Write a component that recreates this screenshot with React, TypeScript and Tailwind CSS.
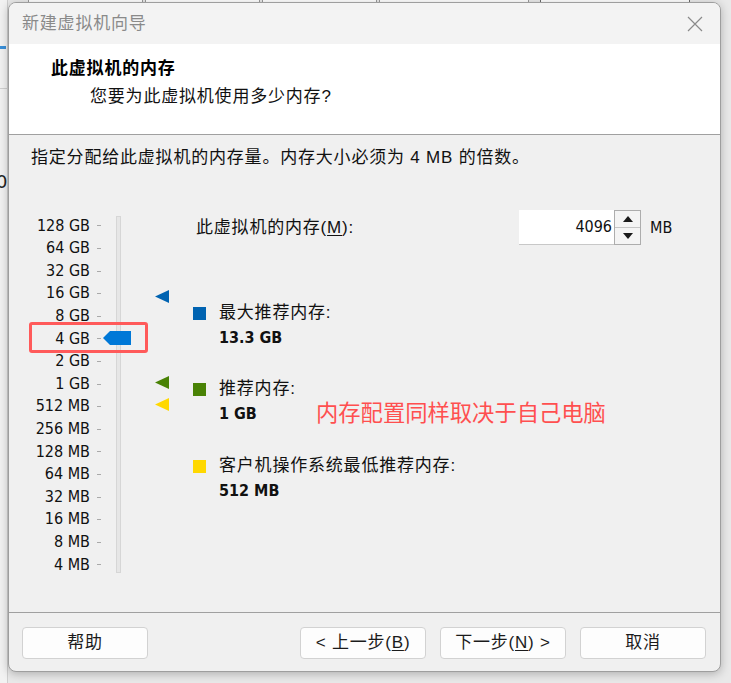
import React from "react";

const LABELS = [
  "128 GB",
  "64 GB",
  "32 GB",
  "16 GB",
  "8 GB",
  "4 GB",
  "2 GB",
  "1 GB",
  "512 MB",
  "256 MB",
  "128 MB",
  "64 MB",
  "32 MB",
  "16 MB",
  "8 MB",
  "4 MB",
];

const CJK = "font-['Liberation_Sans','Noto_Sans_CJK_SC',sans-serif] text-[17px] tracking-[0.8px]";
const NUM = "font-['DejaVu_Sans_Condensed','Liberation_Sans',sans-serif] text-[16px]";

function Marker({ color, className }: { color: string; className: string }) {
  return (
    <svg className={className} width="14" height="13" viewBox="0 0 14 13">
      <polygon points="0,6.5 14,0 14,13" fill={color} />
    </svg>
  );
}

function Btn({ children }: { children: React.ReactNode }) {
  return (
    <div
      className={`w-[126px] h-[32px] flex items-center justify-center rounded-[4px] border border-[#d2d2d2] bg-[#fdfdfd] text-[#1b1b1b] ${CJK}`}
    >
      {children}
    </div>
  );
}

export default function App() {
  return (
    <div className="relative w-[731px] h-[683px] overflow-hidden bg-[#e9e9e9]">
      {/* background window remnants */}
      <div className="absolute left-0 top-0 w-[8px] h-[683px] bg-[#f2f2f2] border-r border-[#cfcfcf]" />
      <div className="absolute left-0 top-[46px] w-[6px] h-[3px] bg-[#3a8fd8]" />
      <div className="absolute left-0 top-[88px] w-[8px] h-[1px] bg-[#d0d0d0]" />
      <div className="absolute left-[-4px] top-[170px] text-[18px] text-[#222] font-['DejaVu_Sans',sans-serif] leading-[24px]">
        0
      </div>
      <div className="absolute left-[28px] top-[-14px] w-[115px] h-[18px] border border-[#9a9a9a] bg-white" />
      <div className="absolute left-[145px] top-[-14px] w-[115px] h-[18px] border border-[#9a9a9a] bg-white" />
      <div className="absolute left-[262px] top-[-14px] w-[115px] h-[18px] border border-[#9a9a9a] bg-white" />
      <div className="absolute left-[379px] top-[-14px] w-[150px] h-[18px] border border-[#9a9a9a] bg-white" />
      <div className="absolute left-[540px] top-[-14px] w-[150px] h-[18px] border border-[#6a6a6a] bg-white" />

      {/* dialog */}
      <div className="relative ml-[8px] mt-[2px] w-[713px] h-[670px] rounded-[8px] border border-[#9e9e9e] overflow-hidden bg-[#f0f0f0] shadow-[0_2px_10px_rgba(0,0,0,0.25)] flex flex-col">
        {/* title bar */}
        <div className="h-[41px] bg-[#f3f3f3] flex items-center justify-between pl-[13px] pr-[17px]">
          <span className={`${CJK} text-[#8a8a8a] leading-[24px]`}>新建虚拟机向导</span>
          <svg width="16" height="16" viewBox="0 0 16 16">
            <path d="M1 1 L15 15 M15 1 L1 15" stroke="#8a8a8a" strokeWidth="1.2" fill="none" />
          </svg>
        </div>

        {/* header */}
        <div className="h-[91px] bg-white border-b border-[#a0a0a0] flex flex-col pt-[13px]">
          <div className={`${CJK} font-bold pl-[42px] leading-[24px] text-black`}>此虚拟机的内存</div>
          <div className={`${CJK} pl-[81px] leading-[24px] mt-[4px] text-[#111]`}>
            您要为此虚拟机使用多少内存?
          </div>
        </div>

        {/* body */}
        <div className="h-[477px] flex flex-col">
          <div className={`${CJK} pl-[22px] pt-[12px] leading-[22px] text-[#111]`}>
            指定分配给此虚拟机的内存量。内存大小必须为 4 MB 的倍数。
          </div>

          <div className="relative flex mt-[41px]">
            {/* labels */}
            <div className="ml-[1px] w-[80px] pt-[4.7px] flex flex-col">
              {LABELS.map((l) => (
                <div key={l} className={`h-[22.6px] leading-[22.6px] text-right text-[#111] ${NUM}`}>
                  {l}
                </div>
              ))}
            </div>
            {/* ticks */}
            <div className="ml-[7px] w-[4px] pt-[4.7px] flex flex-col">
              {LABELS.map((l) => (
                <div key={l} className="h-[22.6px] flex items-center">
                  <div className="w-[4px] h-[1px] bg-[#a9a9a9]" />
                </div>
              ))}
            </div>
            {/* track */}
            <div className="ml-[15px] mt-[6px] w-[5px] h-[357px] bg-[#e6e6e6] border border-[#d6d6d6]" />

            {/* right column */}
            <div className="ml-[72px] flex flex-col">
              <div className="h-[35px] flex items-center">
                <span className={`${CJK} ml-[3px] w-[323px] leading-[22px] text-[#111]`}>
                  此虚拟机的内存(<span className="underline underline-offset-2">M</span>):
                </span>
                <div className="w-[95px] h-[35px] bg-white border-b border-[#c8c8c8] flex items-center justify-end pr-[2px]">
                  <span className={`${NUM} text-[#111]`}>4096</span>
                </div>
                <div className="w-[27px] h-[35px] border border-[#adadad] flex flex-col bg-[#f0f0f0]">
                  <div className="flex-1 flex items-center justify-center border-b border-[#c6c6c6] bg-[#f4f4f4]">
                    <svg width="10" height="6" viewBox="0 0 10 6">
                      <polygon points="5,0 10,6 0,6" fill="#1a1a1a" />
                    </svg>
                  </div>
                  <div className="flex-1 flex items-center justify-center bg-[#f4f4f4]">
                    <svg width="10" height="6" viewBox="0 0 10 6">
                      <polygon points="0,0 10,0 5,6" fill="#1a1a1a" />
                    </svg>
                  </div>
                </div>
                <span className={`${NUM} ml-[9px] text-[#111]`}>MB</span>
              </div>

              {/* legend 1 */}
              <div className="mt-[55px] flex">
                <div className="mt-[7px] w-[13px] h-[13px] bg-[#0063b1]" />
                <div className="ml-[13px] flex flex-col">
                  <span className={`${CJK} leading-[25px] text-[#111]`}>最大推荐内存:</span>
                  <span className={`${NUM} font-bold leading-[25px] text-[#111]`}>13.3 GB</span>
                </div>
              </div>

              {/* legend 2 */}
              <div className="mt-[26px] flex">
                <div className="mt-[7px] w-[13px] h-[13px] bg-[#498205]" />
                <div className="ml-[13px] flex flex-col">
                  <span className={`${CJK} leading-[25px] text-[#111]`}>推荐内存:</span>
                  <div className="flex items-start">
                    <span className={`${NUM} font-bold leading-[25px] w-[97px] text-[#111]`}>1 GB</span>
                    <span className="font-['Noto_Sans_CJK_SC',sans-serif] text-[22.3px] leading-[21px] text-[#ff4f4f]">
                      内存配置同样取决于自己电脑
                    </span>
                  </div>
                </div>
              </div>

              {/* legend 3 */}
              <div className="mt-[27px] flex">
                <div className="mt-[7px] w-[13px] h-[13px] bg-[#ffd800]" />
                <div className="ml-[13px] flex flex-col">
                  <span className={`${CJK} leading-[25px] text-[#111]`}>客户机操作系统最低推荐内存:</span>
                  <span className={`${NUM} font-bold leading-[25px] text-[#111]`}>512 MB</span>
                </div>
              </div>
            </div>

            {/* slider thumb */}
            <svg className="absolute left-[94px] top-[121px]" width="28" height="14" viewBox="0 0 28 14">
              <polygon points="0,7 7,0 28,0 28,14 7,14" fill="#0078d7" />
            </svg>
            {/* markers */}
            <Marker color="#0063b1" className="absolute left-[146px] top-[80px]" />
            <Marker color="#498205" className="absolute left-[146px] top-[166px]" />
            <Marker color="#ffd800" className="absolute left-[146px] top-[188px]" />
            {/* red highlight */}
            <div className="absolute left-[20px] top-[112px] w-[119px] h-[31px] border-[3px] border-[#ff5a5a] rounded-[3px]" />
          </div>
        </div>

        {/* footer */}
        <div className="flex-1 border-t border-[#a0a0a0] flex items-start pt-[14px] pl-[13px]">
          <Btn>帮助</Btn>
          <div className="ml-[152px]">
            <Btn>
              &lt; 上一步(<span className="underline underline-offset-2">B</span>)
            </Btn>
          </div>
          <div className="ml-[14px]">
            <Btn>
              下一步(<span className="underline underline-offset-2">N</span>) &gt;
            </Btn>
          </div>
          <div className="ml-[14px]">
            <Btn>取消</Btn>
          </div>
        </div>
      </div>
    </div>
  );
}
